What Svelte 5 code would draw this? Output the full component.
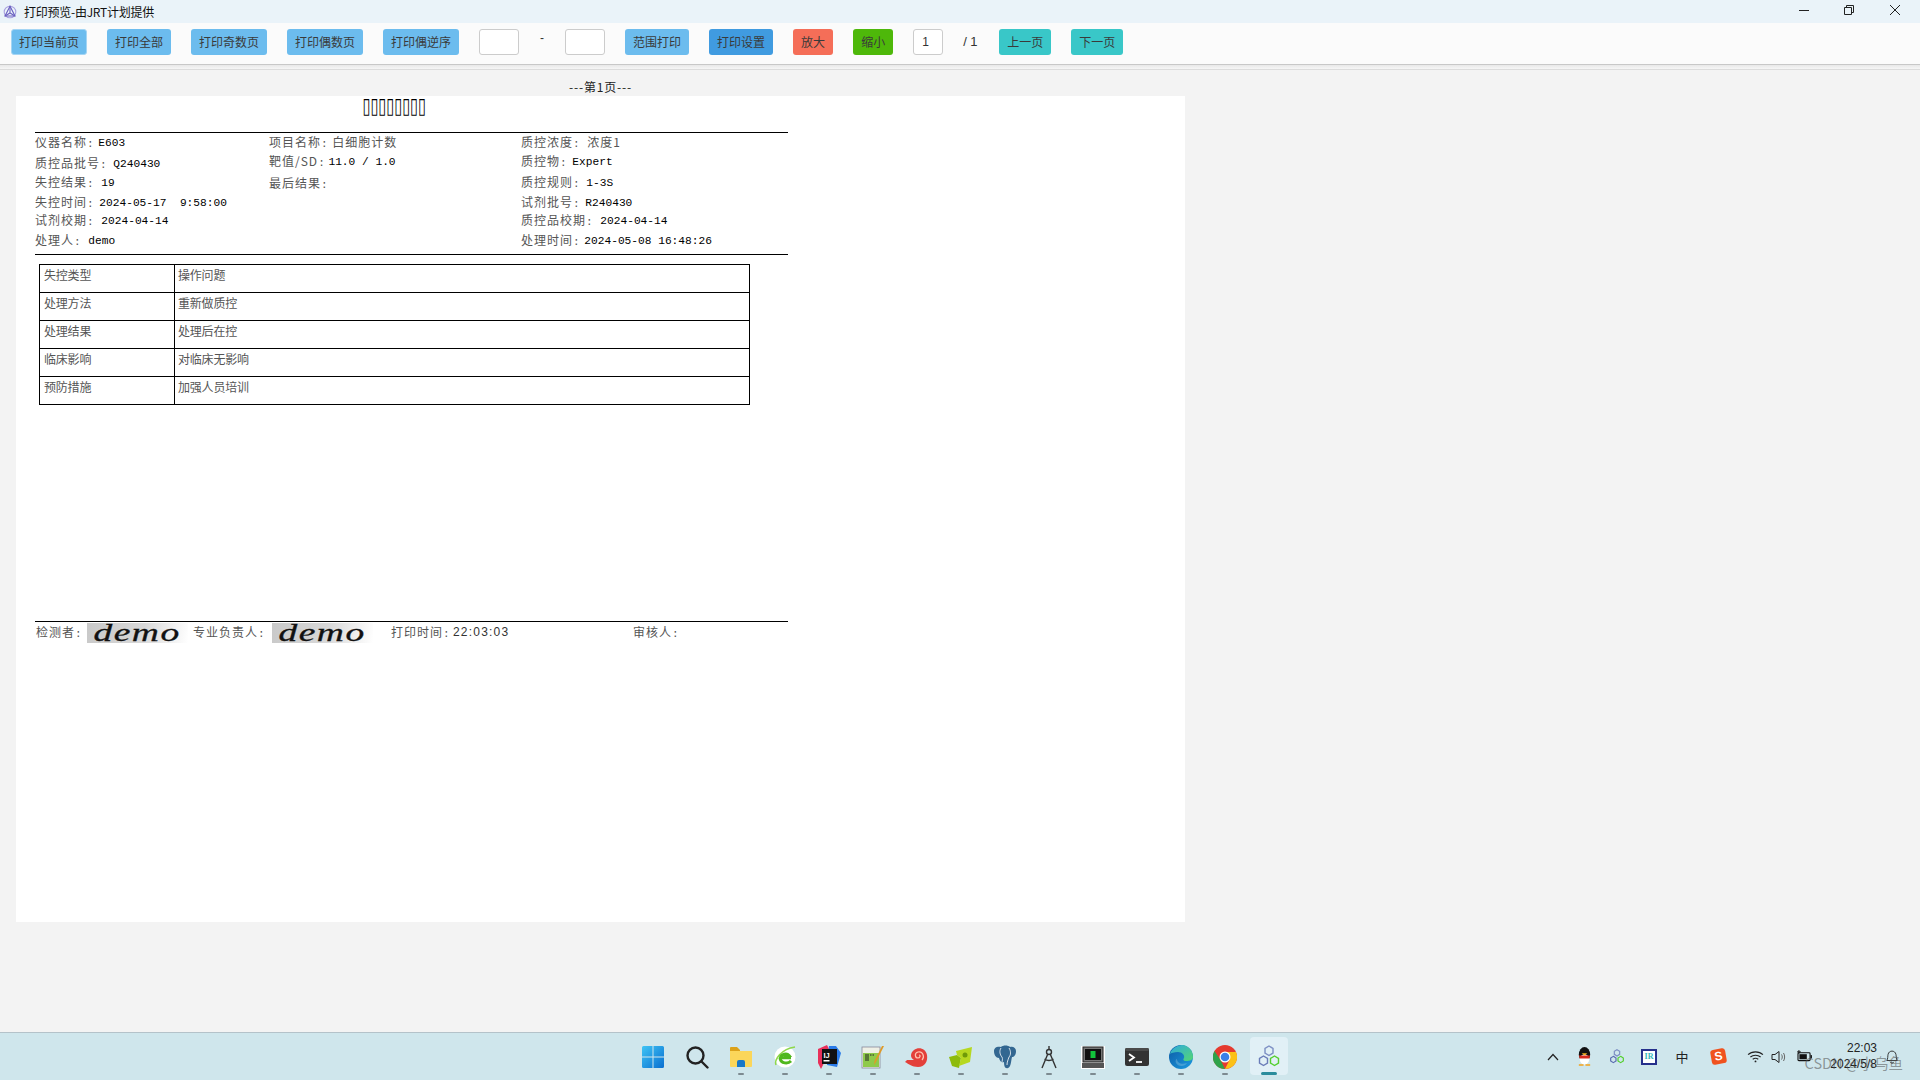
<script>
  const tools1 = [
    { t: '打印当前页', c: 'sky' }, { t: '打印全部', c: 'sky' }, { t: '打印奇数页', c: 'sky' },
    { t: '打印偶数页', c: 'sky' }, { t: '打印偶逆序', c: 'sky' }
  ];
  const tools2 = [
    { t: '范围打印', c: 'sky' }, { t: '打印设置', c: 'blue' }, { t: '放大', c: 'red' }, { t: '缩小', c: 'green' }
  ];
  const cols = [
    { w: 234, rows: [
      { l: '仪器名称', v: 'E603', h: 21, g: 2 }, { l: '质控品批号', v: 'Q240430', h: 19, g: 4 },
      { l: '失控结果', v: '19', h: 20, g: 5 }, { l: '失控时间', v: '2024-05-17  9:58:00', h: 18, g: 3 },
      { l: '试剂校期', v: '2024-04-14', h: 20, g: 5 }, { l: '处理人', v: 'demo', h: 20, g: 5 }
    ] },
    { w: 252, rows: [
      { l: '项目名称', cjk: '白细胞计数', h: 19, g: 2 }, { l: '靶值/SD', v: '11.0 / 1.0', h: 22, g: 1 },
      { l: '最后结果', v: '', h: 20, g: 0 }
    ] },
    { w: 267, rows: [
      { l: '质控浓度', cjk: '浓度1', h: 19, g: 5 }, { l: '质控物', v: 'Expert', h: 21, g: 3 },
      { l: '质控规则', v: '1-3S', h: 20, g: 4 }, { l: '试剂批号', v: 'R240430', h: 18, g: 3 },
      { l: '质控品校期', v: '2024-04-14', h: 20, g: 5 }, { l: '处理时间', v: '2024-05-08 16:48:26', h: 20, g: 2 }
    ] }
  ];
  const table = [
    ['失控类型', '操作问题'], ['处理方法', '重新做质控'], ['处理结果', '处理后在控'],
    ['临床影响', '对临床无影响'], ['预防措施', '加强人员培训']
  ];
</script>

<div class="screen">
  <header class="titlebar">
    <svg class="appicon" viewBox="0 0 14 14" width="14" height="14" fill="none" stroke="#6a5fc0" stroke-width="1.1">
      <circle cx="7" cy="7" r="5.8" stroke="#a9a2e0" />
      <path d="M7 1.2 L2 11 L12 11 Z" />
      <path d="M7 1.2 L7 8 M2 11 L7 8 L12 11" />
    </svg>
    <span class="apptitle">打印预览-由JRT计划提供</span>
    <div class="winctl">
      <svg viewBox="0 0 10 10" width="10" height="10"><path d="M0 5.5H10" stroke="#222" fill="none" /></svg>
      <svg viewBox="0 0 10 10" width="10" height="10" class="max"><path d="M.5 2.5h7v7h-7zM2.5 2.5V.5h7v7H7.5" stroke="#222" fill="none" /></svg>
      <svg viewBox="0 0 10 10" width="10" height="10"><path d="M0 0L10 10M10 0L0 10" stroke="#222" fill="none" /></svg>
    </div>
  </header>

  <nav class="toolbar">
    {#each tools1 as b}<button class="btn {b.c}">{b.t}</button>{/each}
    <input class="range" />
    <span class="dash">-</span>
    <input class="range" />
    {#each tools2 as b}<button class="btn {b.c}">{b.t}</button>{/each}
    <input class="pageno" value="1" />
    <span class="total">/ 1</span>
    <button class="btn teal">上一页</button>
    <button class="btn teal">下一页</button>
  </nav>

  <main class="viewer">
    <div class="sheetwrap">
      <div class="pagelabel">---第1页---</div>
      <section class="page">
        <div class="report">
          <div class="doctitlebox"><h1 class="doctitle">▯▯▯▯▯▯▯▯</h1></div>
          <div class="info">
            {#each cols as col}
              <div class="col" style="width:{col.w}px">
                {#each col.rows as r}
                  <div class="row" style="height:{r.h}px">
                    <span class="lab">{r.l}</span><span class="colon">:</span>
                    {#if r.cjk}<span class="lab cjkval" style="margin-left:{r.g}px">{r.cjk}</span>{:else}<span class="val" style="margin-left:{r.g}px">{r.v}</span>{/if}
                  </div>
                {/each}
              </div>
            {/each}
          </div>
          <table class="detail">
            <tbody>
              {#each table as row}
                <tr><td class="k">{row[0]}</td><td>{row[1]}</td></tr>
              {/each}
            </tbody>
          </table>
          <div class="signrow">
            <span class="lab s1">检测者<span class="colon">:</span></span>
            <div class="sig"><span>demo</span></div>
            <span class="lab s2">专业负责人<span class="colon">:</span></span>
            <div class="sig"><span>demo</span></div>
            <span class="lab s3">打印时间<span class="colon">:</span></span>
            <span class="ptime">22:03:03</span>
            <span class="lab s4">审核人<span class="colon">:</span></span>
          </div>
        </div>
      </section>
    </div>
  </main>

  <footer class="taskbar">
    <div></div>
    <div class="apps">
      <div class="app">
        <svg viewBox="0 0 24 24" width="24" height="24"><defs><linearGradient id="w" x1="0" y1="0" x2="1" y2="1"><stop offset="0" stop-color="#3fc4f5" /><stop offset="1" stop-color="#0a6fd0" /></linearGradient></defs><path fill="url(#w)" d="M1 2.5A1.5 1.5 0 0 1 2.500 1H11.500V11.500H1ZM12.500 1H21.500A1.500 1.500 0 0 1 23 2.500V11.500H12.500ZM1 12.500H11.500V23H2.500A1.500 1.500 0 0 1 1 21.500ZM12.500 12.500H23V21.500A1.500 1.500 0 0 1 21.500 23H12.500Z" /></svg>
      </div>
      <div class="app">
        <svg viewBox="0 0 24 24" width="24" height="24" fill="none" stroke="#222" stroke-width="2.400"><circle cx="10.500" cy="10.500" r="8" /><path d="M16.500 16.500L22.500 22.500" stroke-linecap="round" /></svg>
      </div>
      <div class="app on">
        <svg viewBox="0 0 24 24" width="24" height="24"><path fill="#dca21a" d="M1 3a1 1 0 0 1 1-1h6l3 3v3H1Z" /><path fill="#fbd65a" d="M1 6h22v15a1 1 0 0 1-1 1H2a1 1 0 0 1-1-1Z" /><path fill="#1878c8" d="M8 17a2 2 0 0 1 2-2h4a2 2 0 0 1 2 2v5H8Z" /></svg>
      </div>
      <div class="app on">
        <svg viewBox="0 0 24 24" width="24" height="24" fill="none"><circle cx="12" cy="12" r="10.500" fill="#fff" /><path d="M3 20C1 15 8 4 22 2" stroke="#8fd84a" stroke-width="1.500" /><path d="M18 12.800H7.500C8 9 14 8 16 10.500H11" stroke="#4fb81e" stroke-width="3" /><path d="M7 13C8 19 15 19 18 16" stroke="#4fb81e" stroke-width="3" /></svg>
      </div>
      <div class="app on">
        <svg viewBox="0 0 24 24" width="24" height="24"><path fill="#e8305a" d="M1 4L10 0L13 6L4 24L1 18Z" /><path fill="#2a7be8" d="M12 1H19L24 8L20 22L10 20Z" /><rect x="5" y="4" width="15" height="15" fill="#111" /><text x="6.500" y="12.500" class="ij">IJ</text><rect x="6.500" y="15" width="6" height="1.500" fill="#fff" /></svg>
      </div>
      <div class="app on">
        <svg viewBox="0 0 24 24" width="24" height="24"><rect x="1" y="2" width="18" height="21" fill="#eef0e6" stroke="#889" stroke-width=".8" /><rect x="2" y="8" width="16" height="14" fill="#8fca4a" /><path d="M5 9v7M7 9v7" stroke="#222" /><path d="M9 10h5" stroke="#222" stroke-dasharray="1.500 1" /><path d="M23 1L15 17L13 20L13.500 16L21 1Z" fill="#e09a28" /></svg>
      </div>
      <div class="app on">
        <svg viewBox="0 0 24 24" width="24" height="24" fill="none"><path d="M0 17C4 19 7 22 13 22C20 22 23 16 22 10C21 4 14 1 9 5C5 8 5 13 9 15L2 15Z" fill="#e3403a" /><path d="M17 15C20 12 18 6 13 7C9 8 10 13 13 13C15 13 16 10 14 10" stroke="#ffc3b0" stroke-width="1.200" /></svg>
      </div>
      <div class="app on">
        <svg viewBox="0 0 24 24" width="24" height="24"><path fill="#8dbb0c" d="M0 12L8 10L12 13L10 23L3 21Z" /><path fill="#b6d820" d="M7 6L23 2L21 17L10 21L12 13L8 10Z" /><circle cx="16" cy="10" r="2.500" fill="#6f9a08" /></svg>
      </div>
      <div class="app on">
        <svg viewBox="0 0 24 24" width="24" height="24"><path fill="#336791" d="M1 6C1 2 5 1 8 2C10 0 15 0 17 2C20 1 23 3 23 6C23 10 21 12 19 12C18 16 18 22 15 23C12 24 11 21 11 17C8 18 7 16 6 13C3 13 1 10 1 6Z" /><path d="M8 3C6 6 7 10 9 12C10 14 9 16 9 17M16 3C18 6 18 10 16 12C15 15 14 17 14 20" stroke="#fff" stroke-width=".8" fill="none" /></svg>
      </div>
      <div class="app on">
        <svg viewBox="0 0 24 24" width="24" height="24" fill="none" stroke="#333" stroke-width="1.400"><circle cx="12" cy="7" r="2.500" /><path d="M12 1V4.500M10.800 9L5 23M13.200 9L19 23M7.500 14C10 16 14 16 16.500 14" /></svg>
      </div>
      <div class="app on">
        <svg viewBox="0 0 24 24" width="24" height="24"><rect x="0" y="1" width="24" height="23" fill="#fff" /><rect x="2" y="2" width="20" height="15" fill="#777" stroke="#222" /><rect x="4" y="4" width="16" height="11" fill="#111" /><rect x="9.500" y="6" width="5" height="7" fill="#12c43c" /><rect x="1" y="18" width="22" height="5" fill="#555" /></svg>
      </div>
      <div class="app on">
        <svg viewBox="0 0 24 24" width="24" height="24" fill="none"><rect x="0" y="3" width="24" height="18" rx="2" fill="#333" /><rect x="0" y="3" width="24" height="3" rx="1.500" fill="#4a4a4a" /><path d="M4 9L9 12.500L4 16" stroke="#fff" stroke-width="1.800" /><path d="M11 17H17" stroke="#fff" stroke-width="1.800" /></svg>
      </div>
      <div class="app on">
        <svg viewBox="0 0 24 24" width="24" height="24"><defs><linearGradient id="e" x1="0" y1="0" x2="1" y2="1"><stop offset="0" stop-color="#0c59a4" /><stop offset="1" stop-color="#1d9ce0" /></linearGradient><linearGradient id="e2" x1="0" y1="0" x2="1" y2="1"><stop offset="0" stop-color="#2fa9e0" /><stop offset="1" stop-color="#54d672" /></linearGradient></defs><circle cx="12" cy="12" r="12" fill="url(#e)" /><path fill="url(#e2)" d="M1 9C3 2 10 0 14 0C20 1 24 6 24 12C24 15 21 16 17 16C14 16 14 14 15 13C16 10 13 7 9 7C5 7 2 8 1 9Z" /><path fill="#cfe6ec" d="M8 14C8 18 13 20 18 18C16 22 9 22 7 18C6 16 7 14 8 14Z" opacity=".25" /></svg>
      </div>
      <div class="app on">
        <svg viewBox="0 0 24 24" width="24" height="24"><circle cx="12" cy="12" r="12" fill="#e53a2f" /><path fill="#fbc117" d="M12 7H23A12 12 0 0 1 12 24L17 14Z" /><path fill="#2fa24a" d="M1.500 6L7.500 15L12 24A12 12 0 0 1 1.500 6Z" /><circle cx="12" cy="12" r="5.500" fill="#fff" /><circle cx="12" cy="12" r="4.300" fill="#3b7fe8" /></svg>
      </div>
      <div class="app on active">
        <svg viewBox="0 0 24 24" width="24" height="24" fill="none" stroke-width="1.400"><path d="M12 1L16 3.500V8L12 10.500L8 8V3.500Z" stroke="#7d8fc4" /><path d="M6.500 11L10.500 13.500V18L6.500 20.500L2.500 18V13.500Z" stroke="#6a7cb8" /><path d="M17.500 11L21.500 13.500V18L17.500 20.500L13.500 18V13.500Z" stroke="#54cf2e" /></svg>
      </div>
    </div>
    <div class="tray">
      <svg viewBox="0 0 12 8" width="12" height="8" class="t-chev" fill="none" stroke="#222" stroke-width="1.200"><path d="M1 7L6 1.500L11 7" /></svg>
      <svg viewBox="0 0 18 20" width="17" height="19" class="t-qq"><ellipse cx="9" cy="8" rx="6" ry="8" fill="#111" /><ellipse cx="9" cy="13" rx="5" ry="5.500" fill="#fff" /><path d="M3 9H15L14 12H4Z" fill="#d42a1e" /><path d="M6 6.500L12 6.500L9 9Z" fill="#f5b21a" /><path d="M3 19H8M10 19H15" stroke="#f5a21a" stroke-width="1.500" /></svg>
      <svg viewBox="0 0 24 24" width="16" height="16" class="t-hex" fill="none" stroke-width="1.800"><path d="M12 1L16 3.500V8L12 10.500L8 8V3.500Z" stroke="#7d8fc4" /><path d="M6.500 11L10.500 13.500V18L6.500 20.500L2.500 18V13.500Z" stroke="#5a6cb0" /><path d="M17.500 11L21.500 13.500V18L17.500 20.500L13.500 18V13.500Z" stroke="#54cf2e" /></svg>
      <div class="t-ir">IR</div>
      <span class="t-ime">中</span>
      <div class="t-s">S</div>
      <svg viewBox="0 0 18 14" width="17" height="13" class="t-wifi" fill="none" stroke="#222" stroke-width="1.200"><path d="M1 5C5 1 13 1 17 5M3.500 7.500C6.500 5 11.500 5 14.500 7.500M6 10C8 8.500 10 8.500 12 10" /><circle cx="9" cy="12.300" r="1" fill="#222" stroke="none" /></svg>
      <svg viewBox="0 0 16 14" width="16" height="14" class="t-vol" fill="none" stroke="#222"><path d="M1 4.500H4L8 1.500V12.500L4 9.500H1Z" /><path d="M10.500 4.500C11.500 6 11.500 8 10.500 9.500M12.500 3C14 5.500 14 8.500 12.500 11" stroke="#666" /></svg>
      <svg viewBox="0 0 18 14" width="17" height="13" class="t-bat"><rect x="2" y="3" width="13" height="8.500" rx="1" fill="none" stroke="#111" stroke-width="1.200" /><rect x="3.500" y="4.500" width="8" height="5.500" fill="#111" /><rect x="15.500" y="5.500" width="1.500" height="3.500" fill="#111" /><path d="M3 0L3 4M1 2H5" stroke="#111" /></svg>
      <div class="clock"><span>22:03</span><span class="cdate">2024/5/8</span></div>
      <svg viewBox="0 0 16 18" width="14" height="16" class="t-bell" fill="none" stroke="#222"><path d="M2 13C3.500 11 3 8 3.500 6C4.500 1 11.500 1 12.500 6C13 8 12.500 11 14 13ZM6 14.500C6.500 16.500 9.500 16.500 10 14.500" /></svg>
    </div>
    <div class="watermark">CSDN @小乌鱼</div>
  </footer>
</div>

<style>
  :global(body) { margin: 0; background: #f3f3f3; }
  .screen {
    width: 1920px; height: 1080px; display: flex; flex-direction: column; overflow: hidden; position: relative;
    font-family: "Noto Sans CJK SC", "Noto Sans", sans-serif;
  }
  .titlebar { height: 23px; flex: none; background: #eaf3f9; display: flex; align-items: center; padding-left: 3px; box-sizing: border-box; }
  .appicon { margin-right: 7px; }
  .apptitle { font-size: 12px; color: #111; letter-spacing: -.25px; }
  .winctl { margin: -3px 0 0 auto; display: flex; align-items: center; padding-right: 20px; gap: 35px; }
  .winctl .max { margin-right: 1px; }
  .toolbar {
    height: 42px; flex: none; box-sizing: border-box; background: #fbfbfb; border-bottom: 1px solid #c8c8c8;
    display: flex; align-items: flex-start; gap: 20px; padding: 6px 0 0 11px;
  }
  .btn {
    height: 26px; padding: 0 7px; border: 1px solid transparent; border-radius: 3px; box-sizing: border-box;
    font: 12px/24px "Noto Sans CJK SC", sans-serif; color: #3a3a3a; white-space: nowrap; margin: 0;
  }
  .sky { background: #6cbcee; }
  .btn:first-child { border-color: #a4d5f4; }
  .blue { background: #409be0; }
  .red { background: #f56e58; }
  .green { background: #4eb80a; }
  .teal { background: #39c7c8; }
  input {
    box-sizing: border-box; height: 26px; margin: 0; padding: 0; border: 1px solid #cccccc; border-radius: 3px; background: #fff;
    font: 12px "Liberation Sans", sans-serif; text-align: center; color: #333; outline: none;
  }
  .range { width: 40px; }
  .pageno { width: 30px; text-align: left; padding-left: 8px; }
  .dash { width: 6px; font: 12px/18px "Liberation Sans", sans-serif; color: #333; text-align: center; }
  .total { width: 16px; font: 13px/26px "Liberation Sans", sans-serif; color: #333; white-space: nowrap; }
  .viewer {
    flex: 1; min-height: 0; position: relative;
    background: linear-gradient(#e8e8e8, #f6f6f6 4px, #dcdcdc 4px, #dcdcdc 5px, #f3f3f3 5px);
  }
  .sheetwrap { width: 1169px; margin-left: 16px; }
  .pagelabel { height: 31px; box-sizing: border-box; padding-top: 12px; text-align: center; font-size: 12px; line-height: 20px; color: #222; letter-spacing: .8px; }
  .page { height: 826px; background: #fff; padding-left: 19px; box-sizing: border-box; }
  .report { width: 753px; }
  .doctitlebox { margin-left: 4px; width: 710px; height: 36px; display: flex; justify-content: center; }
  .doctitle {
    margin: 0; height: 24px; transform: scale(.9, 1.35) translateY(-1px);
    font: bold 16px/24px "DejaVu Sans", sans-serif; color: #000; letter-spacing: 0;
  }
  .info { display: flex; height: 121px; border-top: 1px solid #000; border-bottom: 1px solid #000; }
  .col { flex: none; margin-top: -1px; }
  .row { line-height: 20px; white-space: pre; font-size: 12px; }
  .lab { font-size: 12px; letter-spacing: 1px; color: #555; font-family: "Noto Sans CJK SC", sans-serif; }
  .colon { font: 11px "Liberation Mono", monospace; color: #555; }
  .val { font: 11.2px "Liberation Mono", monospace; color: #000; white-space: pre; position: relative; top: -1px; }
  .detail { margin: 9px 0 0 4px; width: 711px; border-collapse: collapse; table-layout: fixed; }
  .detail td {
    border: 1px solid #000; height: 28px; padding: 0 0 8px 3px; font-size: 12px; line-height: 18px; color: #555;
    letter-spacing: -.2px; box-sizing: border-box; vertical-align: middle;
  }
  .detail .k { width: 135px; padding-left: 4px; }
  .signrow { margin-top: 216px; border-top: 1px solid #000; display: flex; align-items: flex-start; height: 24px; }
  .signrow .lab { line-height: 17px; margin-top: 1px; white-space: nowrap; }
  .s1 { margin-left: 1px; width: 51px; }
  .s2 { margin-left: 5px; width: 79px; }
  .s3 { margin-left: 18px; width: 62px; }
  .s4 { margin-left: 125px; }
  .ptime { font: 12px/20px "Liberation Sans", sans-serif; letter-spacing: 1.2px; color: #333; width: 55px; white-space: nowrap; }
  .sig {
    width: 101px; height: 20px; flex: none; margin-top: 1px; background: linear-gradient(100deg, #c9c9c9, #d8d8d8 55%, #fff);
    display: flex; justify-content: center;
  }
  .sig span {
    font: italic 25px/20px "Liberation Serif", serif; color: #111; letter-spacing: 1px; transform: scaleX(1.5);
    -webkit-text-stroke: .3px #111;
  }
  .taskbar { height: 48px; flex: none; box-sizing: border-box; border-top: 1px solid #b4c2c9; background: #cfe6ec; display: grid; grid-template-columns: 1fr auto 1fr; align-items: center; position: relative; }
  .apps { display: flex; margin-left: 1px; }
  .app { width: 44px; height: 47px; position: relative; display: flex; align-items: center; justify-content: center; }
  .app.on::after { content: ""; position: absolute; bottom: 5px; left: 19px; width: 6px; height: 2.500px; border-radius: 2px; background: #7d8a90; }
  .app.active::before { content: ""; position: absolute; left: 3px; top: 4px; width: 38px; height: 38px; border-radius: 4px; background: #e1f0f6; }
  .app.active svg { position: relative; }
  .app.active::after { left: 14px; width: 16px; height: 3px; background: #2b8c9c; }
  .ij { font: bold 7.500px "Liberation Sans", sans-serif; fill: #fff; }
  .tray { display: flex; align-items: center; justify-content: flex-end; height: 47px; padding-right: 21px; }
  .t-chev { margin-right: 17px; }
  .t-qq { margin-right: 16px; }
  .t-hex { margin-right: 16px; }
  .t-ir {
    width: 16px; height: 16px; box-sizing: border-box; border: 2px solid #26308c; background: #fff; color: #35b7b7;
    font: bold 8px/12px "Liberation Serif", serif; text-align: center; margin-right: 17px;
  }
  .t-ime { font-size: 13px; line-height: 16px; color: #222; width: 16px; text-align: center; margin-right: 21px; }
  .t-s {
    width: 15px; height: 15px; background: #f0521e; color: #fff; border-radius: 3px; transform: rotate(-10deg);
    font: bold 12px/15px "Liberation Sans", sans-serif; text-align: center; margin-right: 21px;
  }
  .t-wifi { margin-right: 7px; }
  .t-vol { margin-right: 9px; }
  .t-bat { margin-right: 16px; }
  .clock { display: flex; flex-direction: column; align-items: flex-end; font: 12px/15px "Liberation Sans", sans-serif; color: #222; width: 48px; margin-right: 8px; white-space: nowrap; }
  .cdate { margin-top: 1px; }
  .watermark {
    position: absolute; right: 17px; top: 20px; font-size: 14.5px; line-height: 20px; color: rgba(80, 80, 80, .55); white-space: nowrap;
  }
</style>
